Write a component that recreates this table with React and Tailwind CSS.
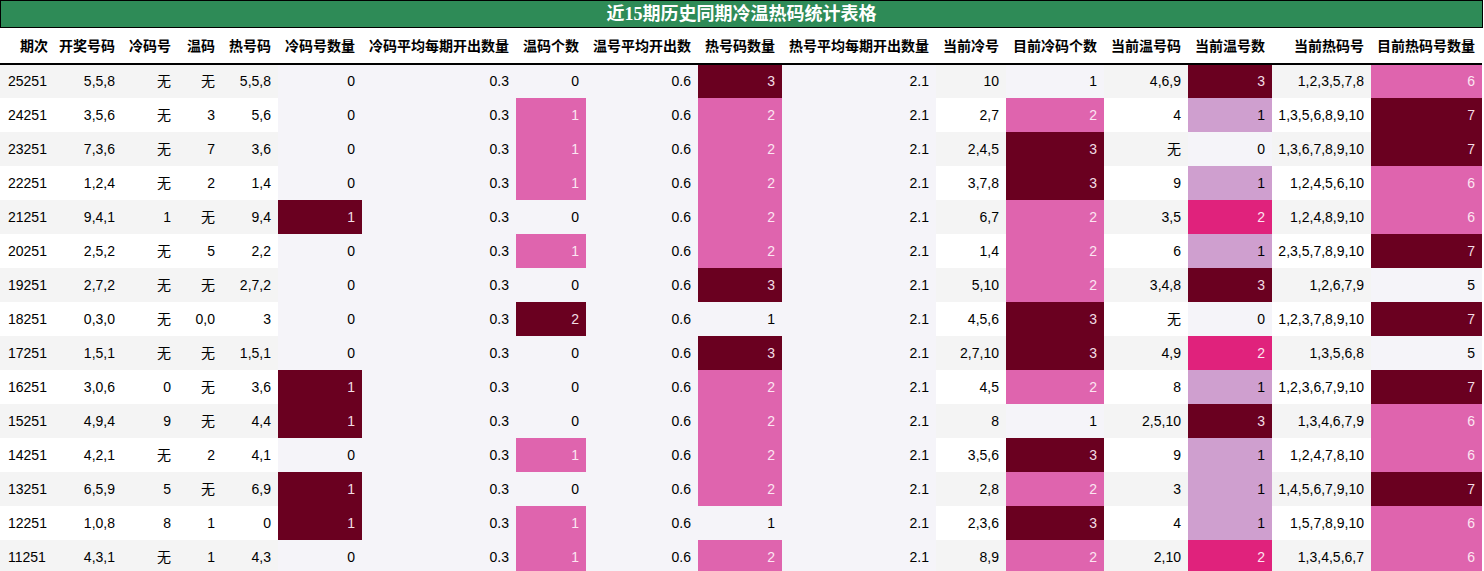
const cols = [
	{ key: "period", label: "期次", w: "w-[55px]", left: true },
	{ key: "draw", label: "开奖号码", w: "w-[67px]" },
	{ key: "cold", label: "冷码号", w: "w-[56px]" },
	{ key: "warm", label: "温码", w: "w-[44px]" },
	{ key: "hot", label: "热号码", w: "w-[56px]" },
	{ key: "coldCount", label: "冷码号数量", w: "w-[84px]", lav: true },
	{ key: "coldAvg", label: "冷码平均每期开出数量", w: "w-[154px]", lav: true },
	{ key: "warmCount", label: "温码个数", w: "w-[70px]", lav: true },
	{ key: "warmAvg", label: "温号平均开出数", w: "w-[112px]", lav: true },
	{ key: "hotCount", label: "热号码数量", w: "w-[84px]", lav: true },
	{ key: "hotAvg", label: "热号平均每期开出数量", w: "w-[154px]", lav: true },
	{ key: "curCold", label: "当前冷号", w: "w-[70px]" },
	{ key: "curColdCount", label: "目前冷码个数", w: "w-[98px]", lav: true },
	{ key: "curWarm", label: "当前温号码", w: "w-[84px]" },
	{ key: "curWarmCount", label: "当前温号数", w: "w-[84px]", lav: true },
	{ key: "curHot", label: "当前热码号", w: "w-[99px]" },
	{ key: "curHotCount", label: "目前热码号数量", w: "w-[111px]", lav: true },
];

const raw = [
	["25251", "5,5,8", "无", "无", "5,5,8", 0, "0.3", 0, "0.6", 3, "2.1", "10", 1, "4,6,9", 3, "1,2,3,5,7,8", 6],
	["24251", "3,5,6", "无", "3", "5,6", 0, "0.3", 1, "0.6", 2, "2.1", "2,7", 2, "4", 1, "1,3,5,6,8,9,10", 7],
	["23251", "7,3,6", "无", "7", "3,6", 0, "0.3", 1, "0.6", 2, "2.1", "2,4,5", 3, "无", 0, "1,3,6,7,8,9,10", 7],
	["22251", "1,2,4", "无", "2", "1,4", 0, "0.3", 1, "0.6", 2, "2.1", "3,7,8", 3, "9", 1, "1,2,4,5,6,10", 6],
	["21251", "9,4,1", "1", "无", "9,4", 1, "0.3", 0, "0.6", 2, "2.1", "6,7", 2, "3,5", 2, "1,2,4,8,9,10", 6],
	["20251", "2,5,2", "无", "5", "2,2", 0, "0.3", 1, "0.6", 2, "2.1", "1,4", 2, "6", 1, "2,3,5,7,8,9,10", 7],
	["19251", "2,7,2", "无", "无", "2,7,2", 0, "0.3", 0, "0.6", 3, "2.1", "5,10", 2, "3,4,8", 3, "1,2,6,7,9", 5],
	["18251", "0,3,0", "无", "0,0", "3", 0, "0.3", 2, "0.6", 1, "2.1", "4,5,6", 3, "无", 0, "1,2,3,7,8,9,10", 7],
	["17251", "1,5,1", "无", "无", "1,5,1", 0, "0.3", 0, "0.6", 3, "2.1", "2,7,10", 3, "4,9", 2, "1,3,5,6,8", 5],
	["16251", "3,0,6", "0", "无", "3,6", 1, "0.3", 0, "0.6", 2, "2.1", "4,5", 2, "8", 1, "1,2,3,6,7,9,10", 7],
	["15251", "4,9,4", "9", "无", "4,4", 1, "0.3", 0, "0.6", 2, "2.1", "8", 1, "2,5,10", 3, "1,3,4,6,7,9", 6],
	["14251", "4,2,1", "无", "2", "4,1", 0, "0.3", 1, "0.6", 2, "2.1", "3,5,6", 3, "9", 1, "1,2,4,7,8,10", 6],
	["13251", "6,5,9", "5", "无", "6,9", 1, "0.3", 0, "0.6", 2, "2.1", "2,8", 2, "3", 1, "1,4,5,6,7,9,10", 7],
	["12251", "1,0,8", "8", "1", "0", 1, "0.3", 1, "0.6", 1, "2.1", "2,3,6", 3, "4", 1, "1,5,7,8,9,10", 6],
	["11251", "4,3,1", "无", "1", "4,3", 0, "0.3", 1, "0.6", 2, "2.1", "8,9", 2, "2,10", 2, "1,3,4,5,6,7", 6],
];

const MAROON = "bg-[#6a0020] text-[#f2dde4]";
const PINK = "bg-[#df64ae] text-[#fce6f2]";
const HOTPINK = "bg-[#e0227c] text-[#fde4ef]";
const LILAC = "bg-[#cf9fcf] text-black";

// conditional fills, per column
const fills = {
	coldCount: { 1: MAROON },
	warmCount: { 1: PINK, 2: MAROON },
	hotCount: { 2: PINK, 3: MAROON },
	curColdCount: { 2: PINK, 3: MAROON },
	curWarmCount: { 1: LILAC, 2: HOTPINK, 3: MAROON },
	curHotCount: { 6: PINK, 7: MAROON },
};

const rows = raw.map((r) => Object.fromEntries(cols.map((c, i) => [c.key, r[i]])));

export default function App() {
	return (
		<div
			className="w-[1484px] h-[571px] overflow-hidden bg-white text-black"
			style={{ fontFamily: '"Liberation Sans", "Noto Sans CJK SC", sans-serif' }}
		>
			<div
				className="h-[28px] w-[1483px] bg-[#2e8b57] border border-black flex items-center justify-center pt-px text-white font-bold text-[18px]"
				style={{ fontFamily: '"Liberation Serif", "Noto Sans CJK SC", serif' }}
			>
				近15期历史同期冷温热码统计表格
			</div>
			<table className="table-fixed border-collapse text-[14px]">
				<thead>
					<tr className="h-[36px] border-b-2 border-black">
						{cols.map((c) => (
							<th key={c.key} className={`${c.w} p-0 pt-px pr-[7px] text-right font-bold whitespace-nowrap`}>
								{c.label}
							</th>
						))}
					</tr>
				</thead>
				<tbody>
					{rows.map((row, ri) => (
						<tr key={row.period} className="h-[34px]">
							{cols.map((c) => {
								const v = row[c.key];
								const fill = fills[c.key]?.[v];
								let bg;
								if (fill) bg = fill;
								else if (c.lav) bg = "bg-[#f5f4f9]";
								else bg = ri % 2 === 0 ? "bg-[#f4f4f4]" : "bg-white";
								return (
									<td
										key={c.key}
										className={`${c.w} ${bg} p-0 whitespace-nowrap ${c.left ? "text-left pl-[8px]" : "text-right pr-[7px]"}`}
									>
										{v}
									</td>
								);
							})}
						</tr>
					))}
				</tbody>
			</table>
		</div>
	);
}
